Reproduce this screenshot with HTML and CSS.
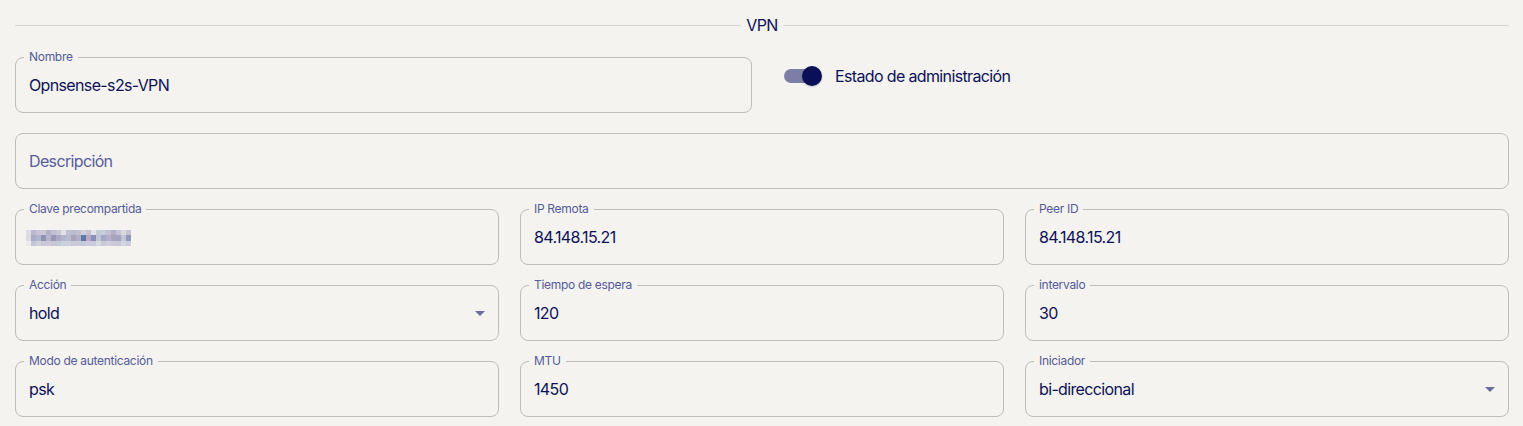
FILE: index.html
```html
<!DOCTYPE html>
<html lang="es">
<head>
<meta charset="utf-8">
<title>VPN</title>
<link rel="stylesheet" href="styles.css">
</head>
<body>
<div class="page">
  <div class="divider"><span class="line"></span><span class="title">VPN</span><span class="line"></span></div>

  <div class="row two">
    <div class="field"><span class="label">Nombre</span><div class="value">Opnsense-s2s-VPN</div></div>
    <div class="switch-wrap">
      <span class="switch"><span class="track"></span><span class="thumb"></span></span>
      <span class="switch-label">Estado de administración</span>
    </div>
  </div>

  <div class="row one">
    <div class="field"><div class="value placeholder">Descripción</div></div>
  </div>

  <div class="row three">
    <div class="field"><span class="label">Clave precompartida</span>
      <div class="value">
        <svg class="mosaic" width="105" height="16" viewBox="0 0 105 16" shape-rendering="crispEdges">
          <g>
            <rect x="0" y="0" width="5" height="5" fill="#e0dde2"/><rect x="5" y="0" width="5" height="5" fill="#b8b8d0"/><rect x="10" y="0" width="5" height="5" fill="#c8c4d4"/><rect x="15" y="0" width="5" height="5" fill="#cbc6d4"/><rect x="20" y="0" width="5" height="5" fill="#b0b0c8"/><rect x="25" y="0" width="5" height="5" fill="#c0bed0"/><rect x="30" y="0" width="5" height="5" fill="#c6c6d6"/><rect x="35" y="0" width="5" height="5" fill="#e0e0e6"/><rect x="40" y="0" width="5" height="5" fill="#c0c0d4"/><rect x="45" y="0" width="5" height="5" fill="#bcbcd0"/><rect x="50" y="0" width="5" height="5" fill="#c0c0d0"/><rect x="55" y="0" width="5" height="5" fill="#d0d0dc"/><rect x="60" y="0" width="5" height="5" fill="#c8c0d0"/><rect x="65" y="0" width="5" height="5" fill="#e0e4ea"/><rect x="70" y="0" width="5" height="5" fill="#c4ccd8"/><rect x="75" y="0" width="5" height="5" fill="#c8ccd8"/><rect x="80" y="0" width="5" height="5" fill="#c0c0d0"/><rect x="85" y="0" width="5" height="5" fill="#b0b0c8"/><rect x="90" y="0" width="5" height="5" fill="#c4c4d4"/><rect x="95" y="0" width="5" height="5" fill="#d8d8e0"/><rect x="100" y="0" width="5" height="5" fill="#c4c4d4"/>
          </g>
          <g>
            <rect x="0" y="5" width="5" height="6" fill="#dedbe0"/><rect x="5" y="5" width="5" height="6" fill="#a8acc8"/><rect x="10" y="5" width="5" height="6" fill="#b4b4cc"/><rect x="15" y="5" width="5" height="6" fill="#8e92b4"/><rect x="20" y="5" width="5" height="6" fill="#b8b4c8"/><rect x="25" y="5" width="5" height="6" fill="#9896b4"/><rect x="30" y="5" width="5" height="6" fill="#aca8c4"/><rect x="35" y="5" width="5" height="6" fill="#b0b4cc"/><rect x="40" y="5" width="5" height="6" fill="#b8bccc"/><rect x="45" y="5" width="5" height="6" fill="#a8a4c0"/><rect x="50" y="5" width="5" height="6" fill="#b4b0c4"/><rect x="55" y="5" width="5" height="6" fill="#5f76a8"/><rect x="60" y="5" width="5" height="6" fill="#b8a8c0"/><rect x="65" y="5" width="5" height="6" fill="#8890b8"/><rect x="70" y="5" width="5" height="6" fill="#c0c4d4"/><rect x="75" y="5" width="5" height="6" fill="#a4a8c4"/><rect x="80" y="5" width="5" height="6" fill="#b4b0c8"/><rect x="85" y="5" width="5" height="6" fill="#a8a4bc"/><rect x="90" y="5" width="5" height="6" fill="#a4a4c0"/><rect x="95" y="5" width="5" height="6" fill="#c4c4d4"/><rect x="100" y="5" width="5" height="6" fill="#9298bc"/>
          </g>
          <g>
            <rect x="0" y="11" width="5" height="5" fill="#eceaea"/><rect x="5" y="11" width="5" height="5" fill="#c4c4d8"/><rect x="10" y="11" width="5" height="5" fill="#d0d0dc"/><rect x="15" y="11" width="5" height="5" fill="#c8c8d8"/><rect x="20" y="11" width="5" height="5" fill="#ccc8d8"/><rect x="25" y="11" width="5" height="5" fill="#c8c4d4"/><rect x="30" y="11" width="5" height="5" fill="#c4c8d8"/><rect x="35" y="11" width="5" height="5" fill="#ccd0dc"/><rect x="40" y="11" width="5" height="5" fill="#d0d0dc"/><rect x="45" y="11" width="5" height="5" fill="#c8c8d8"/><rect x="50" y="11" width="5" height="5" fill="#ccc8d8"/><rect x="55" y="11" width="5" height="5" fill="#c4c8d8"/><rect x="60" y="11" width="5" height="5" fill="#ccccdc"/><rect x="65" y="11" width="5" height="5" fill="#c8ccdc"/><rect x="70" y="11" width="5" height="5" fill="#d8d8e0"/><rect x="75" y="11" width="5" height="5" fill="#c8c8d8"/><rect x="80" y="11" width="5" height="5" fill="#d0d0dc"/><rect x="85" y="11" width="5" height="5" fill="#ccc8d8"/><rect x="90" y="11" width="5" height="5" fill="#c8c8d8"/><rect x="95" y="11" width="5" height="5" fill="#d4d4e0"/><rect x="100" y="11" width="5" height="5" fill="#ccccdc"/>
          </g>
        </svg>
      </div>
    </div>
    <div class="field"><span class="label">IP Remota</span><div class="value">84.148.15.21</div></div>
    <div class="field"><span class="label">Peer ID</span><div class="value">84.148.15.21</div></div>

    <div class="field select"><span class="label">Acción</span><div class="value">hold</div>
      <svg class="arrow" width="24" height="24" viewBox="0 0 24 24"><path d="M7 10l5 5 5-5z"/></svg>
    </div>
    <div class="field"><span class="label">Tiempo de espera</span><div class="value">120</div></div>
    <div class="field"><span class="label">intervalo</span><div class="value">30</div></div>

    <div class="field"><span class="label">Modo de autenticación</span><div class="value">psk</div></div>
    <div class="field"><span class="label">MTU</span><div class="value">1450</div></div>
    <div class="field select"><span class="label">Iniciador</span><div class="value">bi-direccional</div>
      <svg class="arrow" width="24" height="24" viewBox="0 0 24 24"><path d="M7 10l5 5 5-5z"/></svg>
    </div>
  </div>
</div>
</body>
</html>
```

FILE: styles.css
```css
* { box-sizing: border-box; }

html, body {
  margin: 0;
  background: #f4f3ef;
}

body {
  font-family: Inter, "Noto Sans", "Liberation Sans", sans-serif;
  color: #0d1158;
  font-size: 16px;
  letter-spacing: -0.04em;
}

.page {
  padding: 16px 14px 0 15px;
  display: flex;
  flex-direction: column;
  gap: 20px;
}

.divider {
  display: flex;
  align-items: center;
  height: 19px;
  margin-bottom: 2px;
}

.divider .line {
  flex: 1;
  border-top: 1px solid #d5d3d3;
}

.divider .title {
  padding: 0 5px;
  line-height: 19px;
  color: #0d1158;
}

.row.two {
  display: grid;
  grid-template-columns: 1fr 1fr;
  column-gap: 20px;
  align-items: start;
}

.row.three {
  display: grid;
  grid-template-columns: repeat(3, 1fr);
  column-gap: 21px;
  row-gap: 20px;
}

.field {
  position: relative;
  height: 56px;
  border: 1px solid #bfbdba;
  border-radius: 8px;
  padding: 0 13px;
  display: flex;
  align-items: center;
}

.field .label {
  position: absolute;
  top: -7px;
  left: 8px;
  padding: 0 5px;
  font-size: 12px;
  line-height: 12px;
  letter-spacing: -0.3px;
  color: #555a99;
  background: #f4f3ef;
}

.field .value {
  flex: 1;
  white-space: nowrap;
  display: flex;
  align-items: center;
}

.field .placeholder {
  color: #585c9b;
}

.mosaic {
  display: block;
  margin-left: -3px;
  margin-top: 2px;
}

.field .arrow {
  flex: none;
  margin-right: -7px;
  fill: #6a6c9c;
}

.switch-wrap {
  display: flex;
  align-items: center;
  height: 38px;
}

.switch {
  display: flex;
  align-items: center;
  padding: 12px;
  width: 58px;
  height: 38px;
}

.switch .track {
  flex: none;
  width: 34px;
  height: 14px;
  border-radius: 7px;
  background: #7c7ea6;
}

.switch .thumb {
  flex: none;
  width: 20px;
  height: 20px;
  border-radius: 50%;
  background: #0a0f57;
  margin-left: -16px;
  box-shadow: 0 1px 2px rgba(0, 0, 0, 0.2);
}

.switch-label {
  margin-left: 5px;
  color: #0d1158;
}
```
